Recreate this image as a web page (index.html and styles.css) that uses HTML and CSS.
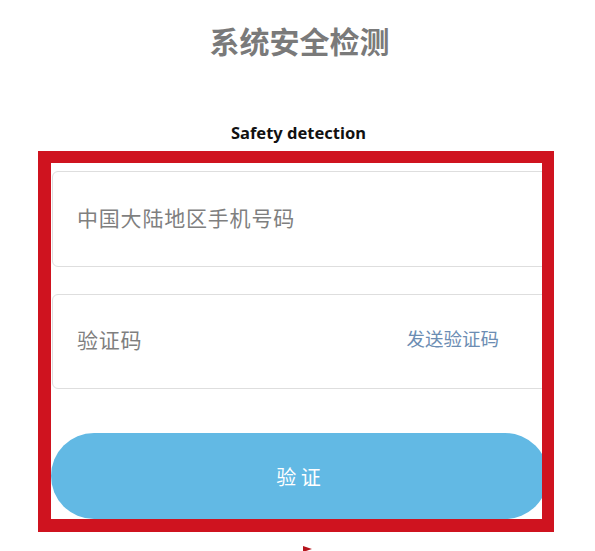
FILE: index.html
```html
<!DOCTYPE html>
<html lang="zh-CN">
<head>
<meta charset="utf-8">
<title>系统安全检测</title>
<link rel="stylesheet" href="styles.css">
</head>
<body>
<div class="page">
  <h1 class="title">系统安全检测</h1>
  <div class="subtitle">Safety detection</div>
  <div class="frame">
    <div class="field">
      <span class="placeholder">中国大陆地区手机号码</span>
    </div>
    <div class="field field-code">
      <span class="placeholder">验证码</span>
      <span class="send">发送验证码</span>
    </div>
    <div class="btn">验 证</div>
  </div>
  <div class="arrow"></div>
</div>
</body>
</html>
```
FILE: styles.css
```css
html, body {
  margin: 0;
  padding: 0;
  background: #ffffff;
}
body {
  font-family: "Noto Sans", "Noto Sans CJK SC", sans-serif;
  width: 595px;
  height: 551px;
  overflow: hidden;
}
.page {
  display: flex;
  flex-direction: column;
}
.title {
  margin: 20px 0 0;
  text-align: center;
  font-family: "Noto Sans CJK SC", sans-serif;
  font-weight: 700;
  font-size: 30px;
  line-height: 40px;
  color: #7a7a7a;
  padding-left: 4px;
}
.subtitle {
  margin-top: 62px;
  text-align: center;
  font-weight: 700;
  font-size: 16.5px;
  line-height: 22px;
  color: #111111;
  padding-left: 2px;
}
.frame {
  margin: 7px 0 0 38px;
  width: 491px;
  height: 348px;
  border-style: solid;
  border-color: #cf131f;
  border-width: 12px 12px 13px 13px;
  padding-top: 8px;
  overflow: hidden;
  display: flex;
  flex-direction: column;
}
.field {
  flex: none;
  margin-left: 1px;
  width: 497px;
  height: 94px;
  border: 1px solid #dedede;
  border-radius: 6px;
  display: flex;
  align-items: center;
  padding-left: 24px;
  box-sizing: content-box;
  font-family: "Noto Sans CJK SC", sans-serif;
}
.field-code {
  margin-top: 27px;
  height: 93px;
  justify-content: space-between;
}
.placeholder {
  font-size: 21px;
  letter-spacing: 0.8px;
  color: #7f7f7f;
  margin-top: -5px;
}
.send {
  font-size: 18.5px;
  color: #6c8db3;
  margin-right: 75px;
  margin-top: -8px;
}
.btn {
  flex: none;
  margin-top: 44px;
  width: 497px;
  height: 86px;
  border-radius: 43px;
  background: #62b9e4;
  color: #ffffff;
  font-family: "Noto Sans CJK SC", sans-serif;
  font-size: 20px;
  display: flex;
  align-items: center;
  justify-content: center;
  padding-right: 2px;
  box-sizing: border-box;
}
.arrow {
  margin: 14px 0 0 303px;
  width: 0;
  height: 0;
  border-left: 9px solid #b5141c;
  border-top: 3px solid transparent;
  border-bottom: 3px solid transparent;
}
```
